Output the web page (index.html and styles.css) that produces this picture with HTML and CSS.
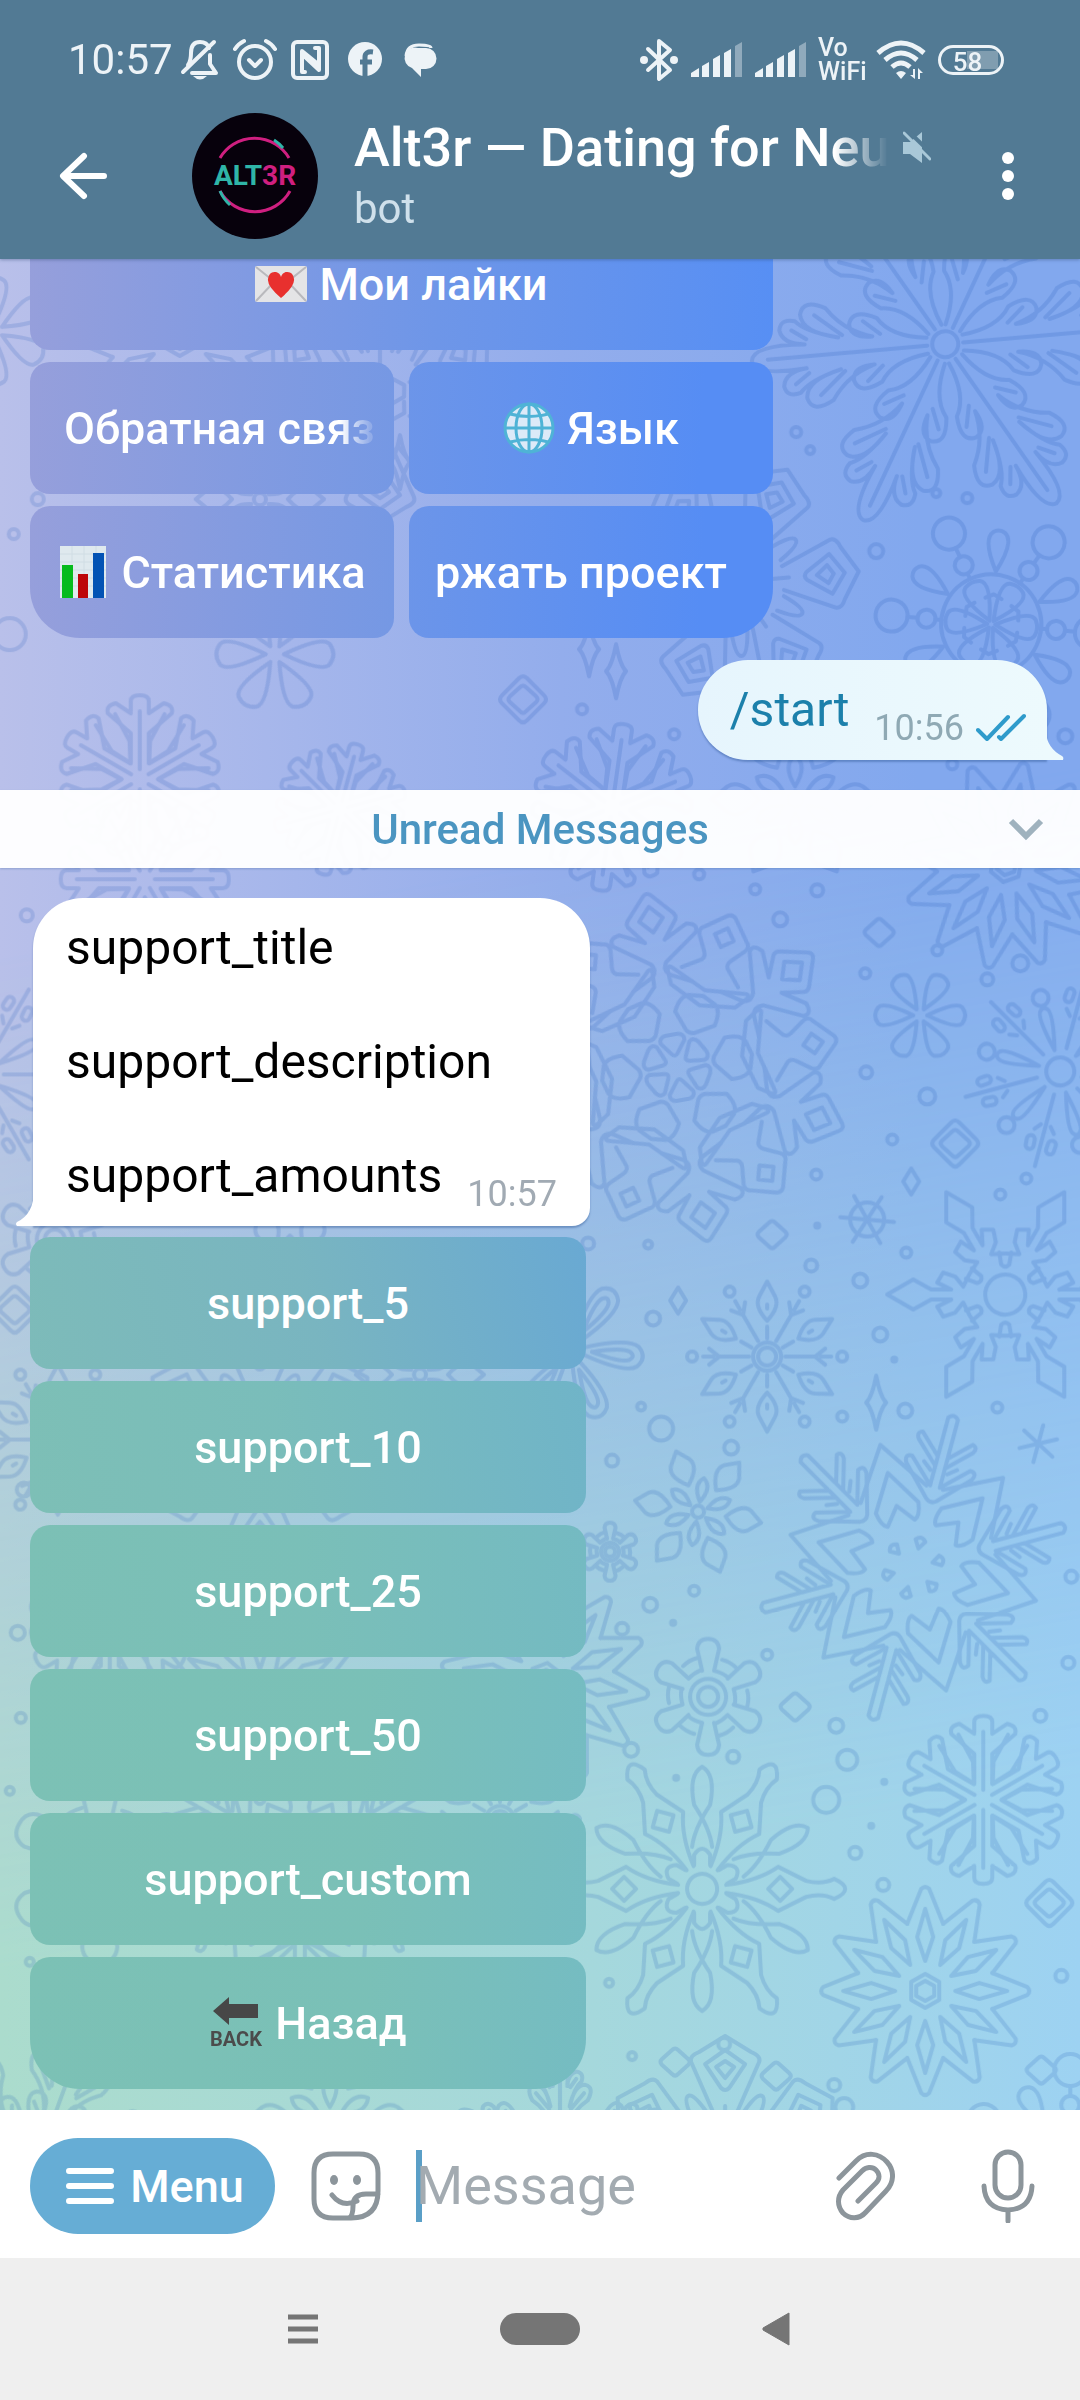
FILE: index.html
```html
<!DOCTYPE html>
<html lang="en">
<head>
<meta charset="utf-8">
<meta name="viewport" content="width=device-width, initial-scale=1">
<title>Alt3r</title>
<link rel="stylesheet" href="styles.css">
</head>
<body>
<div class="app">
  <header class="top">
    <div class="status">
      <span class="clock">10:57</span>
      <div class="status-left">
        <svg class="ic" viewBox="0 0 44 44"><path d="M10 27q3-4 3-12Q13 4 22 4q7 0 9 6" class="s4"/><path d="M5 34 36 4M14 35h24l-6-9v-9" class="s4"/><path d="M15 38h14q-7 7-14 0Z" class="f"/></svg>
        <svg class="ic" viewBox="0 0 44 44"><circle cx="22" cy="24" r="16" class="s4"/><path d="m16 22 6 6 6-6M2 11q3-5 9-8M42 11q-3-5-9-8" class="s4"/></svg>
        <svg class="ic" viewBox="0 0 44 44"><rect x="5" y="4" width="34" height="36" rx="4" class="s4"/><path d="M17 34h-3V13l16 13M27 10h4v22L16 18" class="s4"/></svg>
        <svg class="ic" viewBox="0 0 44 44"><circle cx="22" cy="21" r="17" class="f"/><path d="M22 39V19q0-6 8-5M17 24h12" stroke="#527a94" stroke-width="5" fill="none"/></svg>
        <svg class="ic" viewBox="0 0 44 44"><path d="M8 18Q9 7 21 7t12 3" stroke="#edf3f7" stroke-width="3" fill="none"/><path d="M20 10h8a10 10 0 0 1 0 21h-5v8l-9-9a10 10 0 0 1 6-20Z" class="f"/></svg>
      </div>
      <div class="status-right">
        <svg width="38" height="44" viewBox="0 0 38 44"><path d="m8 11 22 21-11 9V3l11 9L8 32" class="s4"/><circle cx="4" cy="22" r="4" class="f"/><circle cx="34" cy="22" r="4" class="f"/></svg>
        <svg width="52" height="44" viewBox="0 0 52 44"><path d="M1 39v-4l8-5v9ZM12 39V28l7-4v15ZM23 39V21l7-4v22ZM34 39V15l7-4v28Z" class="f"/><path d="M45 39V8l7-4v35Z" class="f dim"/></svg>
        <svg width="52" height="44" viewBox="0 0 52 44"><path d="M1 39v-4l8-5v9ZM12 39V28l7-4v15ZM23 39V21l7-4v22ZM34 39V15l7-4v28Z" class="f"/><path d="M45 39V8l7-4v35Z" class="f dim"/></svg>
        <span class="vowifi"><span>Vo</span><span>WiFi</span></span>
        <svg width="50" height="44" viewBox="0 0 50 44"><path d="M2 15Q25-5 48 15M9 22q16-14 32 0M16 29q9-8 18 0" stroke="#edf3f7" stroke-width="5" fill="none"/><path d="m20 35q5-4 10 0l-5 6ZM39 31v10l-5-4h3v-6ZM42 41V30l5 5h-3v6Z" class="f"/></svg>
        <span class="battery">58</span>
      </div>
    </div>
    <div class="bar">
      <button class="plain" aria-label="Back"><svg width="48" height="48" viewBox="0 0 48 48"><path d="M25 4 4 24l21 20M5 24h40" fill="none" stroke="#fff" stroke-width="6" stroke-linecap="round" stroke-linejoin="round"/></svg></button>
      <div class="avatar">
        <svg class="ring" viewBox="0 0 126 126"><g fill="none" stroke-width="3"><path d="M28 45A40 40 0 0 1 97 45M98 78A40 40 0 0 1 28 78" stroke="#cf1f80"/><path d="M82 27A40 40 0 0 1 91 35M28 78A40 40 0 0 0 38 92" stroke="#2fb5a8"/></g></svg>
        <span class="logo"><span>ALT</span><span class="pink">3R</span></span>
      </div>
      <div class="peer">
        <div class="peer-row">
          <h1>Alt3r — Dating for Neu</h1>
          <svg width="28" height="34" viewBox="0 0 28 34"><path d="M0 11h7L19 1v31L7 23H0Z" fill="#a9c8d8"/><path d="M1-4 31 25" stroke="#527a94" stroke-width="4"/><path d="m1 2 26 26" stroke="#a9c8d8" stroke-width="3" stroke-linecap="round"/></svg>
        </div>
        <p>bot</p>
      </div>
      <button class="plain" aria-label="More options"><svg width="12" height="48" viewBox="0 0 12 48"><g fill="#fff"><circle cx="6" cy="6" r="6"/><circle cx="6" cy="24" r="6"/><circle cx="6" cy="42" r="6"/></g></svg></button>
    </div>
  </header>

  <main class="chat">
    <svg class="wallpaper" viewBox="0 260 1080 1850" preserveAspectRatio="xMidYMid slice" aria-hidden="true">
      <defs>
        <g id="leaf"><path d="M0-18V-178M-8-18Q-12-54-32-66-44-90-28-94-14-94-14-72-22-100-46-116-58-138-42-142-24-142-16-106-24-138-36-148-40-162-28-164-14-162-12-140-16-192 0-194 16-192 12-140 14-162 28-164 40-162 36-148 24-138 16-106 24-142 42-142 58-138 46-116 22-100 14-72 14-94 28-94 44-90 32-66 12-54 8-18M-30-80l14 16M30-80 16-64M-40-128l22 26M40-128l-22 26M-27-152l10 14M27-152l-10 14"/></g>
        <g id="leafy"><circle r="13"/><use href="#leaf"/><use href="#leaf" transform="rotate(60)"/><use href="#leaf" transform="rotate(120)"/><use href="#leaf" transform="rotate(180)"/><use href="#leaf" transform="rotate(240)"/><use href="#leaf" transform="rotate(300)"/></g>

        <g id="ballarm"><path d="M0-4Q-18-38-8-44 0-48 8-44 18-38 0-4M0-50v-6M0-74v-10"/><circle cy="-65" r="9"/><circle cy="-100" r="16"/><path transform="rotate(30)" d="M0-53Q-16-84-6-92 0-96 6-92 16-84 0-53M-8-26 0-30 8-26"/></g>
        <g id="ball"><circle r="50"/><use href="#ballarm"/><use href="#ballarm" transform="rotate(60)"/><use href="#ballarm" transform="rotate(120)"/><use href="#ballarm" transform="rotate(180)"/><use href="#ballarm" transform="rotate(240)"/><use href="#ballarm" transform="rotate(300)"/></g>

        <g id="triarm"><path d="M-12-48-34-98Q-36-104-26-108L0-124 26-108Q36-104 34-98L12-48M-20-96 0-110 20-96 4-72Q0-68-4-72ZM-9-93 0-99 9-93 0-82ZM-10-22 0-28 10-22V-10M0-34v-20"/><path transform="rotate(30)" d="M-8-50Q-6-74 0-74T8-50"/></g>
        <g id="tri"><use href="#triarm"/><use href="#triarm" transform="rotate(60)"/><use href="#triarm" transform="rotate(120)"/><use href="#triarm" transform="rotate(180)"/><use href="#triarm" transform="rotate(240)"/><use href="#triarm" transform="rotate(300)"/></g>

        <g id="bigarm"><path d="M-3-14-12-26Q-13-32-6-33L6-33Q13-32 12-26L3-14Q0-10-3-14ZM-10-128-34-140Q-46-138-42-130L-8-106Q-2-98-10-92L-30-82M10-128 34-140Q46-138 42-130L8-106Q2-98 10-92L30-82M-10-128-24-146Q-26-150-22-154L-4-174Q0-178 4-174L22-154Q26-150 24-146L10-128M-12-150 0-163 12-150 0-137Z"/><path transform="rotate(30)" d="M-4-38-21-52Q-22-68-14-72L0-76 14-72Q22-68 21-52L4-38Q0-36-4-38ZM-42-88Q-44-94-38-92L0-82 38-92Q44-94 42-88L34-76 0-66-34-76ZM-30-96-16-108Q-10-112-14-118L-24-132Q-28-138-22-142L-4-160Q0-163 4-160L22-142Q28-138 24-132L14-118Q10-112 16-108L30-96M-10-138 0-148 10-138 0-128Z"/></g>
        <g id="big"><use href="#bigarm"/><use href="#bigarm" transform="rotate(60)"/><use href="#bigarm" transform="rotate(120)"/><use href="#bigarm" transform="rotate(180)"/><use href="#bigarm" transform="rotate(240)"/><use href="#bigarm" transform="rotate(300)"/></g>

        <g id="petal"><path d="M0-7Q-14-36-8-42 0-48 8-42 14-36 0-7"/></g>
        <g id="flower"><use href="#petal"/><use href="#petal" transform="rotate(60)"/><use href="#petal" transform="rotate(120)"/><use href="#petal" transform="rotate(180)"/><use href="#petal" transform="rotate(240)"/><use href="#petal" transform="rotate(300)"/></g>

        <g id="loop"><path d="M-3-12Q-18-56-10-68 0-78 10-68 18-56 3-12M0-22Q-8-52-4-60 0-66 4-60 8-52 0-22"/></g>
        <g id="loops"><use href="#loop"/><use href="#loop" transform="rotate(60)"/><use href="#loop" transform="rotate(120)"/><use href="#loop" transform="rotate(180)"/><use href="#loop" transform="rotate(240)"/><use href="#loop" transform="rotate(300)"/></g>

        <g id="sparkarm"><path d="M0-22Q-9-60-3-64 0-67 3-64 9-60 0-22"/><circle cy="-76" r="8"/><path transform="rotate(30)" d="M0-24V-98M-10-62l5 6M10-62l-5 6"/><rect x="-20" y="-82" width="8" height="14" rx="4" transform="rotate(34)"/><rect x="12" y="-82" width="8" height="14" rx="4" transform="rotate(26)"/></g>
        <g id="spark"><circle r="14"/><use href="#sparkarm"/><use href="#sparkarm" transform="rotate(60)"/><use href="#sparkarm" transform="rotate(120)"/><use href="#sparkarm" transform="rotate(180)"/><use href="#sparkarm" transform="rotate(240)"/><use href="#sparkarm" transform="rotate(300)"/></g>

        <g id="spadearm"><path d="M-5-54V-74L-15-92 0-118 15-92 5-74V-54L12-68 22-62 18-50 8-42 20-36M-5-54-12-68-22-62-18-50-8-42-20-36"/><path transform="rotate(30)" d="M-6-42-4-30Q0-26 4-30L6-42"/></g>
        <g id="spade"><circle r="20"/><use href="#spadearm"/><use href="#spadearm" transform="rotate(60)"/><use href="#spadearm" transform="rotate(120)"/><use href="#spadearm" transform="rotate(180)"/><use href="#spadearm" transform="rotate(240)"/><use href="#spadearm" transform="rotate(300)"/></g>

        <g id="droparm"><path d="M0-18v-12M0-36Q-13-50-8-60L0-75 8-60Q13-50 0-36M0-52v4"/><path transform="rotate(30)" d="M0-18v-18M0-48v14M-8-58 0-48 8-58M0-54v-10"/><circle cy="-75" r="5" transform="rotate(30)"/></g>
        <g id="drop"><circle r="9"/><circle r="14"/><use href="#droparm"/><use href="#droparm" transform="rotate(60)"/><use href="#droparm" transform="rotate(120)"/><use href="#droparm" transform="rotate(180)"/><use href="#droparm" transform="rotate(240)"/><use href="#droparm" transform="rotate(300)"/></g>

        <g id="seedarm"><path d="M0-10Q-10-26 0-34 10-26 0-10"/><path transform="rotate(30)" d="M0-28Q-16-42-10-52L0-64 10-52Q16-42 0-28"/></g>
        <g id="seed"><circle r="6"/><use href="#seedarm"/><use href="#seedarm" transform="rotate(60)"/><use href="#seedarm" transform="rotate(120)"/><use href="#seedarm" transform="rotate(180)"/><use href="#seedarm" transform="rotate(240)"/><use href="#seedarm" transform="rotate(300)"/></g>

        <g id="firarm"><path d="M0-20-5-28Q0-34 5-28ZM-5-84-30-108Q-38-108-34-100L-5-70Q0-66 5-70L34-100Q38-108 30-108L5-84V-114L26-134Q32-132 28-126L5-104M-5-84V-114L-26-134Q-32-132-28-126L-5-104M-5-116V-154Q0-160 5-154V-116"/><path transform="rotate(30)" d="M-42-90-38-100M42-90 38-100M-34-76 0-127 34-76M0-98-22-62Q-20-48-14-46L0-64 14-46Q20-48 22-62Z"/></g>
        <g id="fir"><use href="#firarm"/><use href="#firarm" transform="rotate(60)"/><use href="#firarm" transform="rotate(120)"/><use href="#firarm" transform="rotate(180)"/><use href="#firarm" transform="rotate(240)"/><use href="#firarm" transform="rotate(300)"/></g>

        <g id="geararm"><path d="M-6-26-11-48Q-10-58 0-58T11-48L6-26Q14-24 19-20M14-37q8 2 14 8"/></g>
        <g id="gear"><circle r="10"/><circle r="18"/><use href="#geararm"/><use href="#geararm" transform="rotate(60)"/><use href="#geararm" transform="rotate(120)"/><use href="#geararm" transform="rotate(180)"/><use href="#geararm" transform="rotate(240)"/><use href="#geararm" transform="rotate(300)"/></g>

        <g id="busharm"><path d="M0-10V-68M-9-68V-78Q-9-84 0-84T9-78V-66L24-76Q34-74 32-66L9-46V-16L28-28 44-54M-9-16V-46L-32-66Q-34-74-24-76L-9-66M-9-16-28-28-44-54"/></g>
        <g id="bush"><use href="#busharm"/><use href="#busharm" transform="rotate(60)"/><use href="#busharm" transform="rotate(120)"/><use href="#busharm" transform="rotate(180)"/><use href="#busharm" transform="rotate(240)"/><use href="#busharm" transform="rotate(300)"/></g>

        <g id="lacearm"><path d="M-4-24Q-8-56-22-76L-8-104Q-4-120-10-132 0-154 10-132 4-120 8-104L22-76Q8-56 4-24M0-90 12-78 0-66-12-78Z"/><path transform="rotate(30)" d="M-8-24V-34Q0-46 8-34V-24M-10-42Q-8-60 8-84 14-114 0-122-14-114-8-84 8-60 10-42"/></g>
        <g id="lace"><circle r="15"/><use href="#lacearm"/><use href="#lacearm" transform="rotate(60)"/><use href="#lacearm" transform="rotate(120)"/><use href="#lacearm" transform="rotate(180)"/><use href="#lacearm" transform="rotate(240)"/><use href="#lacearm" transform="rotate(300)"/></g>

        <g id="stararm"><path d="M-18-67-4-102Q0-106 4-102L18-67M0-30-8-54 0-82 8-54Z"/></g>
        <g id="starhalf"><use href="#stararm"/><use href="#stararm" transform="rotate(30)"/><use href="#stararm" transform="rotate(60)"/><use href="#stararm" transform="rotate(90)"/><use href="#stararm" transform="rotate(120)"/><use href="#stararm" transform="rotate(150)"/></g>
        <g id="star"><path d="m0-10 9 5V5L0 10-9 5V-5ZM0-17l14 8V9L0 17-14 9V-9Z"/><use href="#starhalf"/><use href="#starhalf" transform="rotate(180)"/></g>

        <g id="dia"><path d="M-3-12Q0-15 3-12L13-3Q16 0 13 3L3 12Q0 15-3 12L-13 3Q-16 0-13-3Z"/></g>
        <g id="dia2"><use href="#dia"/><path d="M-4-21Q0-25 4-21L21-4Q25 0 21 4L4 21Q0 25-4 21L-21 4Q-25 0-21-4Z"/></g>
        <g id="gem"><path d="M0-13 8 0 0 13-8 0Z"/></g>
        <g id="gem2"><path d="M0-27Q4-6 10 0 4 6 0 27-4 6-10 0-4-6 0-27Z"/></g>
        <g id="tick"><path d="M0-19V19M-17-9 17 9M-17 9 17-9"/></g>
      </defs>
      <g class="lines">
        <use href="#leafy" transform="translate(945 345) rotate(-35)"/>
        <use href="#ball" transform="translate(991 625) rotate(-25)"/>
        <use href="#tri" transform="translate(735 583) rotate(25)"/>
        <use href="#bush" transform="translate(612 808) rotate(8)"/>
        <use href="#seed" transform="translate(795 800) scale(1.3)"/>
        <use href="#star" transform="translate(1006 866) rotate(10)"/>
        <use href="#big" transform="translate(677 1068) rotate(-10)"/>
        <use href="#flower" transform="translate(920 1016) rotate(30)"/>
        <use href="#spark" transform="translate(1060 1072) rotate(-15)"/>
        <use href="#spade" transform="translate(1005 1295) rotate(30)"/>
        <use href="#drop" transform="translate(767 1357)"/>
        <use href="#seed" transform="translate(698 1512) rotate(10)"/>
        <use href="#fir" transform="translate(913 1568) rotate(15)"/>
        <use href="#gear" transform="translate(708 1697)"/>
        <use href="#bush" transform="translate(983 1800)"/>
        <use href="#lace" transform="translate(702 1889) rotate(30)"/>
        <use href="#star" transform="translate(925 1991)"/>
        <use href="#star" transform="translate(545 1680) rotate(8)"/>
        <use href="#loops" transform="translate(570 1350) rotate(36)"/>
        <use href="#gear" transform="translate(610 1552) scale(.5)"/>
        <use href="#tick" transform="translate(1038 1444) rotate(15)"/>
        <circle cx="867" cy="1220" r="17"/><use href="#tick" transform="translate(867 1220) rotate(33) scale(1.4)"/>
        <use href="#tri" transform="translate(725 2160)"/>
        <use href="#leafy" transform="translate(560 2170) scale(.6)"/>
        <use href="#leafy" transform="translate(35 2170) rotate(20) scale(.8)"/>
        <use href="#seed" transform="translate(330 2120) scale(1.3)"/>
        <use href="#flower" transform="translate(-5 332) scale(1.2)"/>
        <use href="#bush" transform="translate(140 780)"/>
        <use href="#flower" transform="translate(275 655) rotate(30) scale(1.3)"/>
        <use href="#bush" transform="translate(340 810) rotate(15) scale(.8)"/>
        <use href="#bush" transform="translate(145 880) rotate(30)"/>
        <use href="#spark" transform="translate(-20 1075)"/>
        <use href="#gear" transform="translate(55 1240)"/>
        <use href="#seed" transform="translate(290 1270)"/>
        <use href="#drop" transform="translate(58 1440)"/>
        <use href="#tri" transform="translate(260 1440)"/>
        <use href="#seed" transform="translate(420 1375)"/>
        <use href="#bush" transform="translate(110 1620)"/>
        <use href="#star" transform="translate(260 1700)"/>
        <use href="#gear" transform="translate(100 1870) scale(1.6)"/>
        <use href="#fir" transform="translate(300 1860)"/>
        <use href="#drop" transform="translate(500 1820)"/>
        <use href="#star" transform="translate(180 340)"/>
        <use href="#tri" transform="translate(380 400)"/>
        <use href="#seed" transform="translate(260 500)"/>
        <use href="#ball" transform="translate(1070 2170)"/>
        <use href="#dia2" transform="translate(955 1144)"/><use href="#dia2" transform="translate(1049 1903)"/>
        <use href="#dia" transform="translate(879 933)"/><use href="#dia" transform="translate(772 1235)"/><use href="#dia" transform="translate(795 1707)"/><use href="#dia2" transform="translate(523 700)"/><use href="#dia2" transform="translate(15 1310)"/><use href="#dia" transform="translate(1041 2070)"/><use href="#dia" transform="translate(675 2062)"/><use href="#dia" transform="translate(776 2076)"/>
        <use href="#gem" transform="translate(911 1182)"/><use href="#gem" transform="translate(678 1301)"/><use href="#gem2" transform="translate(876 1403)"/><use href="#gem2" transform="translate(616 672)"/><use href="#gem2" transform="translate(589 650)"/><use href="#gem2" transform="translate(400 463)"/>
        <circle cx="699" cy="875" r="5"/><circle cx="755" cy="890" r="5"/><circle cx="817" cy="891" r="6"/><circle cx="780" cy="920" r="7"/><circle cx="865" cy="974" r="5"/><circle cx="937" cy="951" r="5"/><circle cx="987" cy="980" r="6"/><circle cx="1020" cy="964" r="8"/><circle cx="866" cy="1073" r="6"/><circle cx="927" cy="1097" r="8"/><circle cx="892" cy="1140" r="5"/><circle cx="816" cy="1175" r="5"/><circle cx="1000" cy="1195" r="5"/><circle cx="1026" cy="1179" r="5"/><circle cx="906" cy="1253" r="5"/><circle cx="811" cy="1266" r="6"/><circle cx="860" cy="1281" r="7"/><circle cx="817" cy="1226" r="2"/><circle cx="648" cy="1245" r="4"/><circle cx="653" cy="1319" r="7"/><circle cx="880" cy="1335" r="7"/><circle cx="894" cy="1360" r="2"/><circle cx="842" cy="1417" r="5"/><circle cx="905" cy="1411" r="7"/><circle cx="997" cy="1408" r="5"/><circle cx="641" cy="1407" r="4"/><circle cx="661" cy="1429" r="12"/><circle cx="731" cy="1448" r="7"/><circle cx="612" cy="1461" r="6"/><circle cx="694" cy="1591" r="5"/><circle cx="650" cy="1605" r="7"/><circle cx="673" cy="1623" r="2"/><circle cx="622" cy="1629" r="6"/><circle cx="767" cy="1655" r="5"/><circle cx="836" cy="1726" r="7"/><circle cx="847" cy="1760" r="10"/><circle cx="826" cy="1800" r="13"/><circle cx="884" cy="1782" r="2"/><circle cx="871" cy="1826" r="2"/><circle cx="855" cy="1853" r="6"/><circle cx="883" cy="1885" r="6"/><circle cx="1071" cy="1577" r="6"/><circle cx="1068" cy="1663" r="6"/><circle cx="1040" cy="1716" r="6"/><circle cx="631" cy="1750" r="7"/><circle cx="733" cy="1757" r="6"/><circle cx="676" cy="1778" r="2"/><circle cx="609" cy="1983" r="4"/><circle cx="724" cy="2044" r="6"/><circle cx="632" cy="2056" r="4"/><circle cx="834" cy="2085" r="6"/><circle cx="1061" cy="1976" r="6"/><circle cx="844" cy="2107" r="9"/><circle cx="796" cy="433" r="5"/><circle cx="810" cy="451" r="4"/><circle cx="936" cy="494" r="4"/><circle cx="967" cy="499" r="5"/><circle cx="876" cy="552" r="7"/><circle cx="582" cy="710" r="5"/><circle cx="674" cy="735" r="5"/><circle cx="1065" cy="737" r="7"/><circle cx="952" cy="765" r="5"/><circle cx="38" cy="500" r="6"/><circle cx="14" cy="535" r="5"/><circle cx="10" cy="635" r="16"/><circle cx="27" cy="916" r="6"/><circle cx="24" cy="1490" r="7"/><circle cx="18" cy="1633" r="7"/><circle cx="21" cy="1718" r="5"/><circle cx="10" cy="1791" r="4"/><circle cx="30" cy="1962" r="4"/><circle cx="588" cy="1244" r="6"/>
      </g>
    </svg>

    <div class="keyboard keyboard-blue">
      <button class="key wide"><svg width="52" height="36" viewBox="0 0 52 36"><rect width="52" height="36" rx="2" fill="#e4e4e6"/><path d="m1 1 25 20L51 1M1 35l17-18M51 35 34 17" fill="none" stroke="#b9b9bd" stroke-width="2"/><path d="M26 32Q12 20 13 13 14 5 21 6q4 1 5 5 1-4 5-5 7-1 8 7 1 7-13 19Z" fill="#e8302e"/></svg>Мои лайки</button>
      <button class="key left fade">Обратная связ</button>
      <button class="key right"><svg width="52" height="52" viewBox="0 0 52 52"><circle cx="26" cy="26" r="24" fill="#dceaf8"/><g fill="none" stroke="#4fb3d6" stroke-width="3"><circle cx="26" cy="26" r="24"/><ellipse cx="26" cy="26" rx="13" ry="24"/><path d="M26 2v48M2 26h48M7 12q19 5 38 0M7 40q19-5 38 0"/></g></svg>Язык</button>
      <button class="key left foot-left stats"><svg width="46" height="52" viewBox="0 0 46 52"><path d="M0 0h46v52H0Z" fill="#dfe9ee"/><path d="M0 8h46M0 16h46M0 24h46M0 32h46M0 40h46M12 0v52M24 0v52M36 0v52" stroke="#d0dde4"/><path d="M2 19h11v33H2Z" fill="#06bb1c"/><path d="M18 28h10v24H18Z" fill="#bd0509"/><path d="M33 7h11v45H33Z" fill="#0353b4"/></svg>Статистика</button>
      <button class="key right foot-right shifted">ржать проект</button>
    </div>

    <div class="bubble out">
      <div class="line"><p><a href="#start">/start</a></p><time>10:56</time>
        <svg class="ticks" width="50" height="28" viewBox="0 0 50 28"><path d="m2 17 9 9L32 4M23 24l2 2L48 3" fill="none" stroke="#2f9bcb" stroke-width="4" stroke-linecap="round" stroke-linejoin="round"/></svg>
      </div>
      <svg class="tail tail-out" width="18" height="28" viewBox="0 0 18 28"><path d="M0 0Q1 16 16 24q2 1 1 4H0Z" fill="#edfafd"/></svg>
    </div>

    <div class="unread">
      <span class="unread-text">Unread Messages</span>
      <button class="plain" aria-label="Jump to latest"><svg width="36" height="24" viewBox="0 0 36 24"><path d="m3 3 15 15L33 3" fill="none" stroke="#9fb2be" stroke-width="6"/></svg></button>
    </div>

    <div class="bubble in">
      <p>support_title</p>
      <p>support_description</p>
      <div class="line"><p>support_amounts</p><time>10:57</time></div>
      <svg class="tail tail-in" width="18" height="36" viewBox="0 0 18 36"><path d="M18 0Q18 24 1 32-1 34 1 36H18Z" fill="#fff"/></svg>
    </div>

    <div class="keyboard keyboard-green">
      <button class="key g1">support_5</button>
      <button class="key g2">support_10</button>
      <button class="key g3">support_25</button>
      <button class="key">support_50</button>
      <button class="key">support_custom</button>
      <button class="key foot-left foot-right"><svg width="54" height="60" viewBox="0 0 54 60"><path d="M4 18 20 4v7h29v14H20v7Z" fill="#474747"/><text x="27" y="53" text-anchor="middle" font-family="Roboto, sans-serif" font-weight="700" font-size="20" fill="#4b4b4b">BACK</text></svg>Назад</button>
    </div>
  </main>

  <footer>
    <form class="composer">
      <button type="button" class="menu"><svg width="48" height="42" viewBox="0 0 48 42"><path d="M3 6h42M3 21h42M3 36h42" stroke="#fff" stroke-width="6" stroke-linecap="round"/></svg>Menu</button>
      <button type="button" class="plain" aria-label="Stickers"><svg width="70" height="70" viewBox="0 0 70 70"><g fill="none" stroke="#8c959b" stroke-width="5" stroke-linecap="round" stroke-linejoin="round"><path d="M40 67H22Q3 67 3 48V22Q3 3 22 3h26Q67 3 67 22v18Q67 67 40 67ZM67 43H55Q42 43 42 55 42 65 38 67M21 44q10 13 25 6"/></g><ellipse cx="23" cy="29" rx="4" ry="5" fill="#8c959b"/><ellipse cx="46" cy="29" rx="4" ry="5" fill="#8c959b"/></svg></button>
      <input type="text" placeholder="Message" aria-label="Message">
      <button type="button" class="plain attach" aria-label="Attach"><svg width="60" height="70" viewBox="0 0 60 70"><path d="M4 27 21 10C31 0 44 2 52 11c8 9 7 21-1 29L31 61c-7 8-17 7-23 1-6-7-6-16 0-23L27 20c4-4 10-5 14-1s4 9 0 13L23 50" fill="none" stroke="#8c959b" stroke-width="5" stroke-linecap="round"/></svg></button>
      <button type="button" class="plain" aria-label="Voice message"><svg width="54" height="74" viewBox="0 0 54 74"><g fill="none" stroke="#8c959b" stroke-width="5" stroke-linecap="round"><rect x="14" y="3" width="26" height="46" rx="13"/><path d="M3 37q1 23 24 24 23-1 24-24M27 62v10"/></g></svg></button>
    </form>
    <nav class="sysnav">
      <button class="plain" aria-label="Recent apps"><svg width="30" height="30" viewBox="0 0 30 30"><path d="M0 3h30M0 15h30M0 27h30" stroke="#757575" stroke-width="5"/></svg></button>
      <button class="plain home" aria-label="Home"></button>
      <button class="plain" aria-label="Back"><svg width="28" height="34" viewBox="0 0 28 34"><path d="M1 16 27 1v32L1 18Z" fill="#757575" stroke="#757575" stroke-linejoin="round"/></svg></button>
    </nav>
  </footer>
</div>
</body>
</html>
```
FILE: styles.css
```css
* { box-sizing: border-box; }

body {
  margin: 0;
  font-family: Roboto, "Noto Sans", sans-serif;
}

button {
  font: inherit;
  border: 0;
  padding: 0;
}

svg { display: block; flex: none; }
p, h1 { margin: 0; }

.plain { background: none; flex: none; }

.app {
  display: flex;
  flex-direction: column;
  height: 100vh;
}

/* Status bar and chat header */
.top {
  background: #527a94;
  color: #fff;
  position: relative;
  z-index: 2;
  box-shadow: 0 1px 3px rgba(40, 70, 110, .4);
}

.status {
  display: flex;
  align-items: center;
  height: 92px;
  padding: 28px 76px 0 68px;
  color: #edf3f7;
}

.clock { font-size: 42px; line-height: 48px; }

.status-left {
  display: flex;
  gap: 11px;
  margin-left: 5px;
}

.status-right {
  display: flex;
  align-items: center;
  gap: 12px;
  margin-left: auto;
}

.ic { width: 44px; height: 44px; }
.s4 { fill: none; stroke: #edf3f7; stroke-width: 4; stroke-linecap: round; stroke-linejoin: round; }
.f { fill: #edf3f7; }
.dim { opacity: .4; }

.vowifi {
  display: flex;
  flex-direction: column;
  width: 46px;
  font-size: 25px;
  font-weight: 500;
  line-height: 24px;
}

.battery {
  width: 66px;
  height: 30px;
  padding: 0 7px 0 0;
  border: 3px solid #edf3f7;
  border-radius: 15px;
  font-size: 26px;
  font-weight: 500;
  line-height: 28px;
  text-align: center;
  background: linear-gradient(#809db0, #809db0) 26px center / 31px 18px no-repeat;
}

.bar {
  display: flex;
  align-items: center;
  height: 167px;
  padding: 0 66px 0 59px;
}

.avatar {
  position: relative;
  display: flex;
  align-items: center;
  justify-content: center;
  flex: none;
  width: 126px;
  height: 126px;
  margin: 0 36px 0 85px;
  border-radius: 50%;
  background: #07010c;
}

.ring { position: absolute; inset: 0; }

.logo {
  font-size: 28px;
  font-weight: 700;
  line-height: 32px;
  color: #2fb5a8;
}

.pink { color: #cf1f80; }

.peer { flex: 1; min-width: 0; margin-right: 71px; padding-top: 2px; }

.peer-row {
  display: flex;
  align-items: center;
  gap: 15px;
}

h1 {
  flex: 1;
  min-width: 0;
  overflow: hidden;
  white-space: nowrap;
  font-size: 54px;
  font-weight: 500;
  line-height: 64px;
  -webkit-mask-image: linear-gradient(90deg, #000 90%, transparent);
  mask-image: linear-gradient(90deg, #000 90%, transparent);
}

.peer p {
  font-size: 42px;
  line-height: 58px;
  color: #cfe0eb;
}

/* Conversation */
.chat {
  position: relative;
  z-index: 1;
  display: flex;
  flex-direction: column;
  justify-content: flex-end;
  flex: 1 1 0;
  min-height: 0;
  overflow: hidden;
  padding-bottom: 21px;
  background: linear-gradient(90deg, #b9c0ea, #93adec 52%, #82a8ee 85%);
}

.chat::before {
  content: "";
  position: absolute;
  inset: 0;
  background: linear-gradient(90deg, #abdccd, #a5d8dc 55%, #9dd2f2);
  -webkit-mask-image: linear-gradient(170deg, transparent 34%, rgba(0, 0, 0, .5) 58%, #000 84%);
  mask-image: linear-gradient(170deg, transparent 34%, rgba(0, 0, 0, .5) 58%, #000 84%);
}

.wallpaper {
  position: absolute;
  inset: 0;
  width: 100%;
  height: 100%;
}

.wallpaper path,
.wallpaper circle { vector-effect: non-scaling-stroke; }

.lines {
  fill: none;
  stroke: #1450b4;
  stroke-width: 4;
  stroke-linejoin: round;
  stroke-linecap: round;
  opacity: .16;
}

.keyboard {
  position: relative;
  display: grid;
  flex: none;
  margin-left: 30px;
  row-gap: 12px;
}

.keyboard-blue {
  grid-template-columns: 1fr 1fr;
  column-gap: 15px;
  width: 743px;
  margin-bottom: 22px;
}

.keyboard-green {
  width: 556px;
  margin-top: 11px;
}

.key {
  display: flex;
  align-items: center;
  justify-content: center;
  gap: 12px;
  height: 132px;
  border-radius: 20px;
  color: #fff;
  font-size: 45px;
  font-weight: 500;
  white-space: nowrap;
  overflow: hidden;
  background: linear-gradient(95deg, #7cc1b5, #7ac0b7 60%, #75bcc2);
}

.wide {
  grid-column: 1 / -1;
  background: linear-gradient(93deg, #969fdb, #6e96e8 55%, #578ff4);
}

.left { background: linear-gradient(93deg, #969fdb, #7598e4); }
.right { background: linear-gradient(93deg, #6c95e9, #568df4 80%); }
.foot-left { border-bottom-left-radius: 50px; }
.foot-right { border-bottom-right-radius: 50px; }
.shifted { padding-right: 20px; }
.stats { gap: 15px; padding-left: 2px; }

.fade {
  justify-content: flex-start;
  padding-left: 34px;
  color: transparent;
  background:
    linear-gradient(90deg, #fff 310px, rgba(255, 255, 255, .2) 340px) text,
    linear-gradient(93deg, #969fdb, #7598e4);
}

.g1 { background: linear-gradient(75deg, #7dbbb9, #79b5c0 50%, #69a9d3); }
.g2 { background: linear-gradient(80deg, #7dbfb6, #7abdba 45%, #70b4c8); }
.g3 { background: linear-gradient(85deg, #7cc0b5, #7abfb8 50%, #74bac2); }

.bubble {
  position: relative;
  flex: none;
  width: fit-content;
  padding: 21px 33px 11px;
  border-radius: 50px;
  background: #fff;
  font-size: 48px;
  line-height: 57px;
  color: #000;
  box-shadow: 0 2px 2px rgba(50, 90, 150, .45);
}

.bubble > p { margin-bottom: 57px; }

.in {
  margin-left: 33px;
  border-radius: 50px 50px 18px 0;
}

.out {
  align-self: flex-end;
  margin-right: 33px;
  padding: 21px 21px 11px 32px;
  border-bottom-right-radius: 0;
  background: linear-gradient(90deg, #e6f5fd, #edfafd);
}

.out a { color: #1c80ab; text-decoration: none; }

.line {
  display: flex;
  align-items: flex-start;
}

time {
  margin: 26px 0 0 25px;
  font-size: 36px;
  line-height: 42px;
  color: #a1aab3;
}

.out time { color: #8fa9b4; }
.ticks { align-self: flex-end; margin: 0 0 8px 12px; }
.tail { position: absolute; bottom: 0; }
.tail-in { left: -17px; }
.tail-out { right: -17px; }

.unread {
  position: relative;
  display: grid;
  grid-template-columns: 1fr auto 1fr;
  align-items: center;
  flex: none;
  height: 78px;
  margin: 30px 0;
  padding: 2px 36px 0;
  background: rgba(255, 255, 255, .97);
  box-shadow: 0 1px 2px rgba(50, 90, 150, .3);
}

.unread-text {
  grid-column: 2;
  font-size: 42px;
  font-weight: 500;
  line-height: 50px;
  color: #4b95c1;
}

.unread button { justify-self: end; }

/* Message composer */
.composer {
  display: flex;
  align-items: center;
  height: 148px;
  padding: 4px 45px 0 30px;
  background: #fff;
}

.menu {
  display: flex;
  align-items: center;
  justify-content: center;
  gap: 16px;
  flex: none;
  width: 245px;
  height: 96px;
  margin-right: 36px;
  padding-left: 5px;
  border-radius: 48px;
  background: #66add5;
  color: #fff;
  font-size: 45px;
  font-weight: 500;
}

.composer input {
  flex: 1;
  min-width: 0;
  height: 72px;
  margin: 0 20px 0 35px;
  padding: 0;
  border: 0;
  outline: 0;
  font: 54px/72px Roboto, sans-serif;
  color: #000;
  background: linear-gradient(#5a9fc7, #5a9fc7) left center / 6px 72px no-repeat;
}

.composer input::placeholder { color: #a3abb1; opacity: 1; }
.attach { margin-right: 86px; }

.sysnav {
  display: flex;
  align-items: center;
  justify-content: center;
  gap: 182px;
  height: 142px;
  padding-right: 3px;
  background: #efefef;
}

.home {
  width: 80px;
  height: 32px;
  border-radius: 16px;
  background: #757575;
}
```
